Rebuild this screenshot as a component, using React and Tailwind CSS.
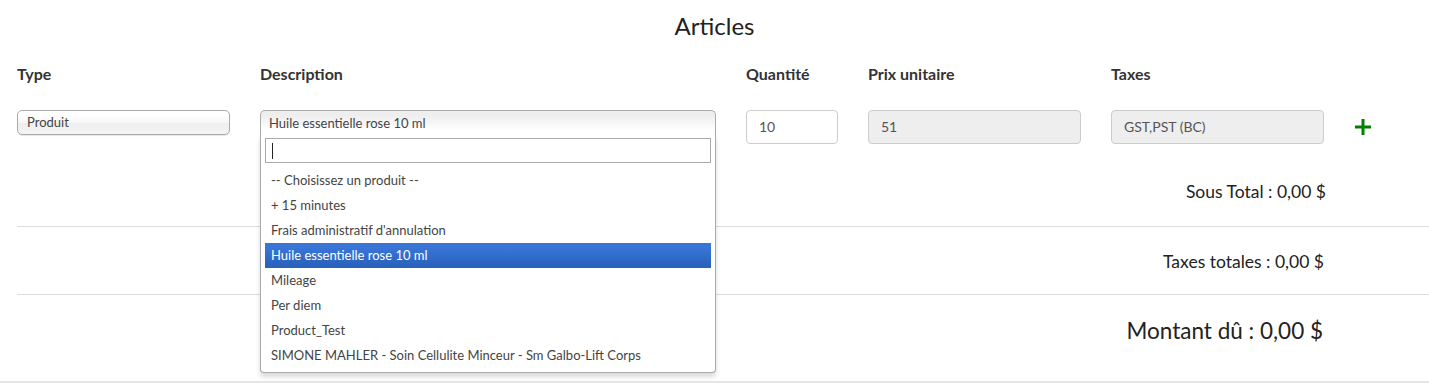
import React from 'react';

const options = [
    '-- Choisissez un produit --',
    '+ 15 minutes',
    "Frais administratif d'annulation",
    'Huile essentielle rose 10 ml',
    'Mileage',
    'Per diem',
    'Product_Test',
    'SIMONE MAHLER - Soin Cellulite Minceur - Sm Galbo-Lift Corps',
];

const App = () => {
    return (
        <div className="w-[1429px] h-[384px] overflow-hidden bg-white font-[Lato,sans-serif] text-[#333]">
            <h2 className="pt-[10px] text-center text-[24px] leading-[32px] text-[#222]">Articles</h2>

            <div className="ml-[17px] mt-[22px] grid grid-cols-[213px_456px_92px_213px_213px_60px] gap-x-[30px]">
                {['Type', 'Description', 'Quantité', 'Prix unitaire', 'Taxes', ''].map((label, i) => (
                    <div key={i} className="text-[16px] font-bold leading-[20px] text-[#333]">{label}</div>
                ))}

                <div className="mt-[26px]">
                    <div className="h-[25px] rounded-[5px] border border-[#aaa] bg-[linear-gradient(#fff_20%,#f6f6f6_50%,#eee_52%,#f4f4f4_100%)] pl-[9px] text-[13px] leading-[23px] text-[#444] shadow-[0_1px_1px_rgba(0,0,0,0.1)]">
                        Produit
                    </div>
                </div>

                <div className="relative z-10 mt-[26px]">
                    <div className="h-[25px] rounded-t-[5px] border border-b-0 border-[#aaa] bg-[linear-gradient(#eee_20%,#fff_80%)] pl-[8px] text-[13px] leading-[25px] text-[#444]">
                        Huile essentielle rose 10 ml
                    </div>
                    <div className="absolute left-0 right-0 top-[25px] rounded-b-[4px] border border-t-0 border-[#aaa] bg-white shadow-[0_4px_5px_rgba(0,0,0,0.15)]">
                        <div className="px-[4px] pt-[3px] pb-[5px]">
                            <div className="flex h-[25px] items-center border border-[#aaa] pl-[6px]">
                                <span className="h-[16px] w-px bg-[#222]" />
                            </div>
                        </div>
                        <ul className="mb-[4px] mr-[4px] pl-[4px]">
                            {options.map((opt, i) => (
                                <li
                                    key={opt}
                                    className={
                                        i === 3
                                            ? 'bg-[linear-gradient(#3875d7_20%,#2a62bc_90%)] px-[6px] py-[5px] text-[13px] leading-[15px] text-white'
                                            : 'px-[6px] py-[5px] text-[13px] leading-[15px] text-[#444]'
                                    }
                                >
                                    {opt}
                                </li>
                            ))}
                        </ul>
                    </div>
                </div>

                <div className="mt-[26px]">
                    <div className="h-[34px] rounded-[4px] border border-[#ccc] px-[12px] text-[14px] leading-[32px] text-[#555]">10</div>
                </div>
                <div className="mt-[26px]">
                    <div className="h-[34px] rounded-[4px] border border-[#ccc] bg-[#eee] px-[12px] text-[14px] leading-[32px] text-[#555]">51</div>
                </div>
                <div className="mt-[26px]">
                    <div className="h-[34px] rounded-[4px] border border-[#ccc] bg-[#eee] px-[12px] text-[14px] leading-[32px] text-[#555]">GST,PST (BC)</div>
                </div>
                <div className="mt-[26px] flex h-[34px] items-center">
                    <svg width="16" height="16" viewBox="0 0 16 16" className="ml-[1px]">
                        <rect x="6.5" y="0" width="3" height="16" fill="#008000" />
                        <rect x="0" y="6.5" width="16" height="3" fill="#008000" />
                    </svg>
                </div>
            </div>

            <div className="w-[1326px] mt-[36px] text-right text-[17.5px] leading-[24px] text-[#222]">Sous Total : 0,00 $</div>
            <div className="ml-[17px] mt-[22px] border-t border-[#ddd]" />
            <div className="w-[1324px] mt-[23px] text-right text-[17.5px] leading-[24px] text-[#222]">Taxes totales : 0,00 $</div>
            <div className="ml-[17px] mt-[20px] border-t border-[#ddd]" />
            <div className="w-[1323px] mt-[20px] text-right text-[22.5px] leading-[32px] text-[#222]">Montant dû : 0,00 $</div>
            <div className="mt-[34px] border-t-2 border-[#e5e5e5]" />
        </div>
    );
};

export default App;
